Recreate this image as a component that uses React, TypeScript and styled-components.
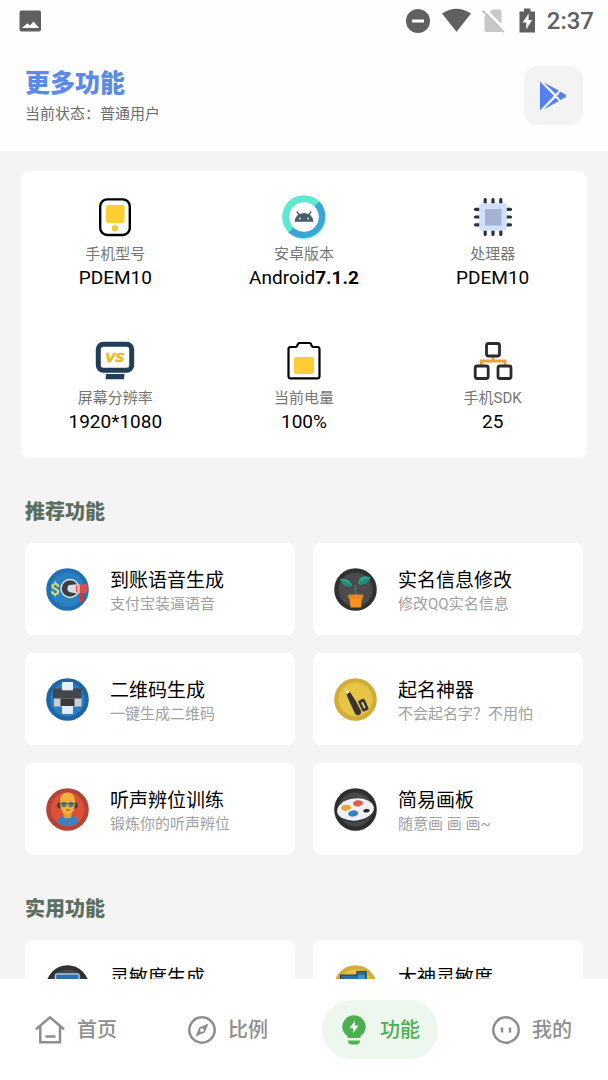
import React from 'react';
import styled, { createGlobalStyle } from 'styled-components';

const GlobalStyle = createGlobalStyle`
  * { box-sizing: border-box; }
  body {
    margin: 0;
    background: #f4f4f4;
    font-family: Roboto, "Noto Sans CJK SC", sans-serif;
    color: #111;
  }
  h1, h2, h3, p, ul, dl, dt, dd { margin: 0; padding: 0; }
  ul { list-style: none; }
  svg { display: block; flex: none; }
`;

const Screen = styled.div`
  display: flex;
  flex-direction: column;
  height: 100vh;
`;

const StatusBar = styled.div`
  display: flex;
  flex: none;
  align-items: center;
  justify-content: space-between;
  height: 41px;
  padding: 0 14px 0 18px;
  background: #fefefe;
  color: #606060;
`;

const StatusIcons = styled.div`
  display: flex;
  align-items: center;
`;

const Clock = styled.time`
  margin-left: 12px;
  font-size: 24px;
  line-height: 28px;
  font-weight: 500;
`;

const Header = styled.header`
  display: flex;
  flex: none;
  justify-content: space-between;
  align-items: flex-end;
  padding: 25px 25px 26px;
  background: #fefefe;
`;

const HeaderText = styled.div`
  display: flex;
  flex-direction: column;
  gap: 4px;
`;

const PageTitle = styled.h1`
  font-size: 25px;
  line-height: 30px;
  font-weight: 900;
  color: #5c8ae6;
`;

const UserState = styled.p`
  font-size: 15px;
  line-height: 22px;
  color: #6c6c6c;
`;

const StoreButton = styled.button`
  display: grid;
  place-items: center;
  width: 59px;
  height: 59px;
  padding: 0;
  border: 0;
  border-radius: 14px;
  background: #f3f3f3;
`;

const Content = styled.main`
  flex: 1;
  min-height: 0;
  overflow-y: auto;
  scrollbar-width: none;
  padding-top: 20px;
`;

const InfoCard = styled.section`
  display: grid;
  grid-template-columns: repeat(3, 1fr);
  row-gap: 49px;
  margin: 0 21px;
  padding: 24px 0;
  border-radius: 8px;
  background: #fff;
`;

const InfoItem = styled.div`
  display: flex;
  flex-direction: column;
  align-items: center;
`;

const InfoLabel = styled.p`
  margin-top: 4px;
  font-size: 15px;
  line-height: 22px;
  color: #757575;
`;

const InfoValue = styled.p`
  font-size: 19px;
  line-height: 25px;
  color: #000;
`;

const Section = styled.section`
  margin-top: 40px;
  padding: 0 25px;
`;

const SectionTitle = styled.h2`
  font-size: 20px;
  line-height: 28px;
  font-weight: 900;
  color: #5b7060;
`;

const FeatureGrid = styled.ul`
  display: grid;
  grid-template-columns: repeat(2, 1fr);
  gap: 18px;
  margin-top: 17px;
`;

const FeatureCard = styled.button`
  display: flex;
  align-items: center;
  gap: 21px;
  width: 100%;
  height: 92px;
  padding: 0 21px;
  border: 0;
  border-radius: 8px;
  background: #fff;
  font-family: inherit;
  text-align: left;
`;

const FeatureText = styled.span`
  display: flex;
  flex-direction: column;
  padding-top: 5px;
`;

const FeatureName = styled.span`
  font-size: 19px;
  line-height: 24px;
  color: #000;
`;

const FeatureHint = styled.span`
  min-height: 22px;
  font-size: 15px;
  line-height: 22px;
  color: #a0a0a0;
`;

const NavBar = styled.nav`
  display: flex;
  flex: none;
  padding: 21px 0;
  background: #fff;
`;

const NavSlot = styled.div`
  display: flex;
  flex: 1;
  justify-content: center;
`;

const NavLink = styled.a<{ $active?: boolean }>`
  display: flex;
  align-items: center;
  gap: 12px;
  height: 59px;
  padding: 0 18px;
  border-radius: 30px;
  background: ${(p) => (p.$active ? '#edf7ee' : 'transparent')};
  color: ${(p) => (p.$active ? '#4caf50' : '#8e8e8e')};
  font-size: 20px;
  line-height: 28px;
  font-weight: 500;
  text-decoration: none;
`;

const PhotoIcon = () => (
  <svg width="24" height="24" viewBox="0 0 24 24">
    <path fill="#606060" fillRule="evenodd" d="M3.500 1.500h17.500a2 2 0 0 1 2 2v17a2 2 0 0 1-2 2H3.500a2 2 0 0 1-2-2v-17a2 2 0 0 1 2-2ZM4 19h17l-5.400-6.500-3.700 4-2.500-2.200Z" />
  </svg>
);

const StatusGlyphs = () => (
  <svg width="130" height="26" viewBox="0 0 130 26">
    <circle cx="13" cy="13" r="12" fill="#606060" />
    <rect x="7" y="11.500" width="12" height="3" fill="#fefefe" />
    <path d="M37 5.500Q51.500 -4 66 5.500L51.500 23.800Z" fill="#606060" />
    <path d="M87.500 1.500h7a2 2 0 0 1 2 2V24H81.500q-2 0-2-2V8Z" fill="#c8c8c8" />
    <path d="M78.500 0 101 22.500" stroke="#fefefe" strokeWidth="3" />
    <path d="M77.500 2.500 98.800 24" stroke="#c4c4c4" strokeWidth="2" />
    <path d="M119 0.500h6.500v3h4.500V24.500h-15.500V3.500h4.500Z" fill="#606060" />
    <path d="M123.600 5.500 117.600 14.500h3.700v7l5.800-9.500h-3.500Z" fill="#fefefe" />
  </svg>
);

const PlayIcon = () => (
  <svg width="30" height="30" viewBox="1 0 30 30">
    <path d="M2 0.500 3 0.800 17 14.900 3 29 2 29.200Z" fill="#5382ec" />
    <path d="M5.500 1.300 21 9.700 18.200 13.500Z M5.500 28.600 21 20 18.200 16.200Z" fill="#5382ec" />
    <path d="M22 10.500 27.500 13.500Q29 15 27.500 16.300L22 19.300 19.800 14.900Z" fill="#5382ec" />
    <path d="M3 .5 21.500 19.800M3 29.300 21.500 10" stroke="#f3f3f3" strokeWidth="1.300" />
    <path d="M18.800 14.900 20.300 13.400 21.800 14.900 20.300 16.400Z" fill="#5382ec" />
  </svg>
);

const PhoneIcon = () => (
  <svg width="44" height="44" viewBox="0 0 44 44">
    <rect x="7.200" y="4.400" width="29.600" height="35.600" rx="7" fill="#fff" stroke="#000" strokeWidth="2.400" />
    <rect x="13" y="10" width="18.500" height="18" rx="2" fill="#fdcd34" />
    <circle cx="22" cy="33.200" r="3.200" fill="#f7c93c" />
  </svg>
);

const AndroidIcon = () => (
  <svg width="44" height="44" viewBox="0 0 44 44">
    <circle cx="22" cy="22" r="21.800" fill="#5ee8cf" />
    <path d="M37.400 6.600A21.800 21.800 0 0 1 6.600 37.400Z" fill="#3ba6d6" />
    <circle cx="22" cy="22" r="14.800" fill="#fff" />
    <path d="M12.500 26.800a9.500 8.800 0 0 1 19 0Z" fill="#455e6c" />
    <path d="m14.800 16.500 3 4M29.200 16.500l-3 4" stroke="#455e6c" strokeWidth="1.300" />
    <circle cx="17.800" cy="23.400" r="1" fill="#fff" />
    <circle cx="26.200" cy="23.400" r="1" fill="#fff" />
  </svg>
);

const ChipIcon = () => (
  <svg width="44" height="44" viewBox="0 0 44 44">
    <path
      d="M14.200 4.500v4M22 4.500v4M29.800 4.500v4M14.200 35.500v4M22 35.500v4M29.800 35.500v4M4.500 14.300h4M4.500 22h4M4.500 29.800h4M35.500 14.300h4M35.500 22h4M35.500 29.800h4"
      stroke="#27333f" strokeWidth="3.200" strokeLinecap="round"
    />
    <rect x="8.200" y="8.200" width="27.600" height="27.600" rx="3" fill="#d3e0fc" />
    <rect x="14" y="14" width="16.500" height="16.500" fill="#a4b2d4" />
  </svg>
);

const MonitorIcon = () => (
  <svg width="44" height="44" viewBox="0 0 44 44">
    <rect x="5.300" y="5.200" width="33.400" height="26" rx="5" fill="#fff" stroke="#203e5a" strokeWidth="5" />
    <path d="M13 35h18.500L31 40.300H12.500Z" fill="#203e5a" />
    <text x="22" y="22.800" fill="#e7bd2f" stroke="#e7bd2f" strokeWidth=".6" fontFamily="DejaVu Sans" fontSize="13" fontWeight="700" fontStyle="italic" textAnchor="middle">VS</text>
  </svg>
);

const BatteryIcon = () => (
  <svg width="44" height="44" viewBox="0 0 44 44">
    <path d="M9 8h4.500q1.500 0 1.800-1.500T17 4h10.500q1.500 0 1.700 1.700T31 8h4.500a2 2 0 0 1 2 2v27.300a2 2 0 0 1-2 2h-27a2 2 0 0 1-2-2V10a2 2 0 0 1 2-2Z" fill="#fff" stroke="#000" strokeWidth="2.200" />
    <rect x="12" y="18" width="20" height="17" rx="2" fill="#fdcd34" />
  </svg>
);

const TreeIcon = () => (
  <svg width="44" height="44" viewBox="0 0 44 44">
    <path d="M22 17v5M10.500 27v-5h23.500v5" fill="none" stroke="#e9a23b" strokeWidth="3" />
    <g fill="#fff" stroke="#2b2b2b" strokeWidth="2.800">
      <rect x="15.500" y="4.500" width="13" height="12.500" rx="2" />
      <rect x="4.200" y="27" width="13" height="12.500" rx="2" />
      <rect x="27" y="27" width="13" height="12.500" rx="2" />
    </g>
  </svg>
);

const Disc = ({ rim, face, children }: { rim: string; face: string; children: React.ReactNode }) => (
  <svg width="43" height="43" viewBox="0 0 43 43">
    <circle cx="21.500" cy="21.500" r="21.300" fill={rim} />
    <circle cx="21.500" cy="21.500" r="17" fill={face} />
    {children}
  </svg>
);

const MegaphoneIcon = () => (
  <Disc rim="#2170b1" face="#2a80c4">
    <text x="9" y="27" fill="#dcd765" fontFamily="Roboto" fontSize="17" fontWeight="700" textAnchor="middle">$</text>
    <circle cx="24" cy="20.500" r="9" fill="#3a3d49" stroke="#e5e8ea" strokeWidth="1.400" />
    <path d="M32.500 25h5v7a2 2 0 0 1-4 1Z" fill="#c63e3b" />
    <path d="M23 17 33 16v10L23 24Q19.500 20.500 23 17Z" fill="#d9dbde" />
    <path d="M30 17.500 41 15.500q2 6-1 10L30 24Z" fill="#d5504a" />
    <path d="M31 17v8l3 .6V16.400Z" fill="#efa6a0" />
  </Disc>
);

const PlantIcon = () => (
  <Disc rim="#303133" face="#4b4b4b">
    <path d="M21.500 28V17" stroke="#2b8574" strokeWidth="1.600" />
    <path d="M6 11Q15 9 18.500 18 9 20 6 11Z" fill="#2eaa92" />
    <path d="M24 16Q26 5 36.500 9.500 33 18 24 16Z" fill="#2eaa92" />
    <path d="M6 11Q13 12.500 18.500 18 9 20 6 11ZM24 16Q29 10 36.500 9.500 33 18 24 16Z" fill="#238c7a" />
    <path d="M15.500 29h12.500l-1 10.500H16.500Z" fill="#f6931f" />
    <rect x="14.200" y="26.500" width="15" height="4" rx="1" fill="#e58425" />
  </Disc>
);

const PrinterIcon = () => (
  <Disc rim="#1e65a3" face="#2b7fbf">
    <rect x="8" y="20" width="27.500" height="8.500" fill="#c7ced8" />
    <rect x="16" y="4" width="11" height="8.500" fill="#e9edf5" />
    <path d="M7 10.500h9v2h11v-2h8.500v10H7Z" fill="#45464a" />
    <rect x="14.500" y="20.500" width="14" height="7.500" fill="#37383c" />
    <rect x="16" y="28" width="11" height="8" fill="#e4e9f5" />
  </Disc>
);

const PenIcon = () => (
  <Disc rim="#d2ac36" face="#e7c446">
    <path d="M10.500 10 15.500 14.500 13.500 16Z" fill="#f6efdb" />
    <path d="M12.500 16.500 16 14l5.500 8.500L27 33q.5 3-2 4t-4-1.500L16.500 26Z" fill="#37332d" />
    <path d="M25.500 23.800 29.500 22 33.300 30.500 29.500 32.200Z" fill="#e9d9b0" stroke="#37332d" strokeWidth="2.600" strokeLinejoin="round" />
  </Disc>
);

const ListenerIcon = () => (
  <Disc rim="#b34436" face="#dd5039">
    <path d="M11.500 35q1-7 7-8h7q6 1 7 8Q22 41 11.500 35Z" fill="#3c81c2" />
    <path d="M17.500 24h8v5q-4 3-8 0Z" fill="#e89a35" />
    <circle cx="14" cy="17.500" r="3" fill="#473c3c" />
    <circle cx="28.800" cy="17.500" r="3" fill="#473c3c" />
    <path d="M14 13Q14 4.500 21.500 4.500T29 13q0 10-4 12.500t-7 0Q14 23 14 13Z" fill="#f0b13c" />
    <circle cx="18" cy="16.500" r="2.700" fill="#5b7472" />
    <circle cx="25" cy="16.500" r="2.700" fill="#5b7472" />
    <path d="M14 15.500h15" stroke="#4e5f5d" strokeWidth="1" />
    <path d="M20 22h4" stroke="#b6562c" strokeWidth="1.200" />
  </Disc>
);

const PaletteIcon = () => (
  <Disc rim="#2d2d2d" face="#484848">
    <ellipse cx="21.500" cy="23" rx="18.500" ry="11" fill="#26343b" transform="rotate(-6 21.500 23)" />
    <ellipse cx="21.500" cy="21.500" rx="18.500" ry="11" fill="#eef0f5" transform="rotate(-6 21.500 21.500)" />
    <ellipse cx="12" cy="19.800" rx="5" ry="3.100" fill="#e9a63a" transform="rotate(-6 12 19.800)" />
    <ellipse cx="24" cy="15.300" rx="5" ry="3.100" fill="#d9604b" transform="rotate(-6 24 15.300)" />
    <ellipse cx="19.200" cy="25.500" rx="5" ry="3.100" fill="#2f82c3" transform="rotate(-6 19.200 25.500)" />
    <ellipse cx="32.500" cy="22.800" rx="3.200" ry="1.700" fill="#26262a" transform="rotate(-6 32.500 22.800)" />
  </Disc>
);

const ScreenIcon = () => (
  <Disc rim="#303133" face="#46484c">
    <rect x="9.500" y="9" width="23.500" height="17" rx="1" fill="#2f6fb0" stroke="#a9c3e0" strokeWidth="1.400" />
  </Disc>
);

const FolderIcon = () => (
  <Disc rim="#d2ac36" face="#e7c446">
    <path d="M6 10h17V6.500h9.500V26H6Z" fill="#2a6f9e" />
    <path d="M8 14h16v-4h7v16H8Z" fill="#3b93c8" />
    <path d="M6.500 26V10H23V6.500h9V26" fill="none" stroke="#1d425c" strokeWidth="1.200" />
  </Disc>
);

const HomeIcon = () => (
  <svg width="30" height="30" viewBox="0 0 30 30" fill="none" stroke="currentColor" strokeWidth="2.500">
    <path d="M1 14.200 15 2.400 29 14.200" />
    <path d="M5.300 11.500V27.200H25V11.500M10.500 21.500h10" />
  </svg>
);

const CompassIcon = () => (
  <svg width="28" height="28" viewBox="0 0 28 28">
    <circle cx="14" cy="14" r="12.700" fill="none" stroke="currentColor" strokeWidth="2.500" />
    <path fill="currentColor" fillRule="evenodd" d="M20.500 7.500 16.800 16.600 7.500 20.500 11.200 11.400ZM14 12.200a1.900 1.900 0 1 0 0 3.800 1.900 1.900 0 0 0 0-3.800Z" />
  </svg>
);

const BulbIcon = () => (
  <svg width="28" height="32" viewBox="0 0 28 32">
    <path fill="currentColor" fillRule="evenodd" d="M14 1.200A11.500 11.500 0 0 1 20.500 22.300V24h-13v-1.700A11.500 11.500 0 0 1 14 1.200ZM15 6.500 9.500 14.300h3.700v5l5.300-7.800H15Z" />
    <path fill="currentColor" d="M8 26.500h12q0 4-3.500 4h-5Q8 30.500 8 26.500Z" />
  </svg>
);

const FaceIcon = () => (
  <svg width="28" height="28" viewBox="0 0 28 28" fill="none" stroke="currentColor" strokeWidth="2.500">
    <circle cx="14" cy="14" r="12.700" />
    <path d="M10 11.500v5M18 11.500v5" />
  </svg>
);

const info: { icon: React.ReactNode; label: string; value: React.ReactNode }[] = [
  { icon: <PhoneIcon />, label: '手机型号', value: 'PDEM10' },
  { icon: <AndroidIcon />, label: '安卓版本', value: <>Android<b>7.1.2</b></> },
  { icon: <ChipIcon />, label: '处理器', value: 'PDEM10' },
  { icon: <MonitorIcon />, label: '屏幕分辨率', value: '1920*1080' },
  { icon: <BatteryIcon />, label: '当前电量', value: '100%' },
  { icon: <TreeIcon />, label: '手机SDK', value: '25' },
];

type Feature = { icon: React.ReactNode; name: string; hint?: string };

const sections: { title: string; features: Feature[] }[] = [
  {
    title: '推荐功能',
    features: [
      { icon: <MegaphoneIcon />, name: '到账语音生成', hint: '支付宝装逼语音' },
      { icon: <PlantIcon />, name: '实名信息修改', hint: '修改QQ实名信息' },
      { icon: <PrinterIcon />, name: '二维码生成', hint: '一键生成二维码' },
      { icon: <PenIcon />, name: '起名神器', hint: '不会起名字？不用怕' },
      { icon: <ListenerIcon />, name: '听声辨位训练', hint: '锻炼你的听声辨位' },
      { icon: <PaletteIcon />, name: '简易画板', hint: '随意画 画 画~' },
    ],
  },
  {
    title: '实用功能',
    features: [
      { icon: <ScreenIcon />, name: '灵敏度生成' },
      { icon: <FolderIcon />, name: '大神灵敏度' },
    ],
  },
];

const tabs = [
  { icon: <HomeIcon />, label: '首页' },
  { icon: <CompassIcon />, label: '比例' },
  { icon: <BulbIcon />, label: '功能', active: true },
  { icon: <FaceIcon />, label: '我的' },
];

export default function App() {
  return (
    <Screen lang="zh-CN">
      <GlobalStyle />
      <StatusBar>
        <PhotoIcon />
        <StatusIcons>
          <StatusGlyphs />
          <Clock>2:37</Clock>
        </StatusIcons>
      </StatusBar>
      <Header>
        <HeaderText>
          <PageTitle>更多功能</PageTitle>
          <UserState>当前状态：普通用户</UserState>
        </HeaderText>
        <StoreButton type="button" aria-label="应用商店">
          <PlayIcon />
        </StoreButton>
      </Header>
      <Content>
        <InfoCard>
          {info.map((item) => (
            <InfoItem key={item.label}>
              {item.icon}
              <InfoLabel>{item.label}</InfoLabel>
              <InfoValue>{item.value}</InfoValue>
            </InfoItem>
          ))}
        </InfoCard>
        {sections.map((section) => (
          <Section key={section.title}>
            <SectionTitle>{section.title}</SectionTitle>
            <FeatureGrid>
              {section.features.map((f) => (
                <li key={f.name}>
                  <FeatureCard type="button">
                    {f.icon}
                    <FeatureText>
                      <FeatureName>{f.name}</FeatureName>
                      <FeatureHint>{f.hint}</FeatureHint>
                    </FeatureText>
                  </FeatureCard>
                </li>
              ))}
            </FeatureGrid>
          </Section>
        ))}
      </Content>
      <NavBar>
        {tabs.map((tab) => (
          <NavSlot key={tab.label}>
            <NavLink href="#" $active={tab.active} aria-current={tab.active ? 'page' : undefined}>
              {tab.icon}
              {tab.label}
            </NavLink>
          </NavSlot>
        ))}
      </NavBar>
    </Screen>
  );
}
